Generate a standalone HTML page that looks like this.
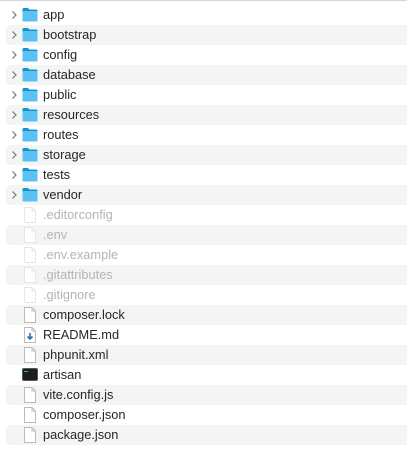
<!DOCTYPE html><html><head><style>
body{margin:0;width:407px;height:452px;background:#fff;font-family:"Liberation Sans",sans-serif;font-size:12.8px;color:#262626;position:relative;overflow:hidden}
.top{position:absolute;left:0;top:0;width:407px;height:1px;background:#d6d6d6}
.r{position:absolute;left:6px;width:401px;height:20px;border-radius:5px 0 0 5px}
.r.s{background:#f3f4f4}
.t{position:absolute;left:37px;top:3px;line-height:14px;white-space:nowrap}
.g .t{color:#b4b4b4}
.ch{position:absolute;left:5px;top:5px}
.ic{position:absolute;left:16px;top:2px}
</style></head><body><div class="top"></div>
<script>
const F='<svg class="ch" width="7" height="10" viewBox="0 0 7 10"><path d="M1.5 1.5L5 5L1.5 8.5" fill="none" stroke="#777" stroke-width="1.2"/></svg><svg class="ic" width="16" height="15" viewBox="0 0 16 15"><path d="M0.5 2.5Q0.5 1 2 1H6L7.5 2.5H14Q15.5 2.5 15.5 4V13Q15.5 14.5 14 14.5H2Q0.5 14.5 0.5 13Z" fill="#1a90d0"/><rect x="0.5" y="4" width="15" height="10.5" rx="1" fill="#5bc0f2"/></svg>';
const D=(c)=>`<svg class="ic" width="14" height="16" viewBox="0 0 14 16" style="left:17px"><path d="M1.5 0.5H9L12.5 4V15.5H1.5Z" fill="#fff" stroke="${c}" stroke-width="1"/><path d="M9 0.5V4H12.5" fill="none" stroke="${c}"/></svg>`;
const items=[["app",F],["bootstrap",F],["config",F],["database",F],["public",F],["resources",F],["routes",F],["storage",F],["tests",F],["vendor",F],
[".editorconfig",D("#e6e6e6"),1],[".env",D("#e6e6e6"),1],[".env.example",D("#e6e6e6"),1],[".gitattributes",D("#e6e6e6"),1],[".gitignore",D("#e6e6e6"),1],
["composer.lock",D("#bbb")],["README.md",D("#bbb")+'<svg class="ic" width="14" height="16" style="left:17px"><path d="M7 6V12M4.5 9.5L7 12L9.5 9.5" stroke="#2a6fb0" stroke-width="1.6" fill="none"/></svg>'],["phpunit.xml",D("#bbb")],
["artisan",'<svg class="ic" width="16" height="14" style="top:3px"><rect x="0.5" y="0.5" width="15" height="12" rx="1.5" fill="#1e1e1e" stroke="#555"/><rect x="2" y="3" width="4" height="1" fill="#3c3"/></svg>'],
["vite.config.js",D("#bbb")],["composer.json",D("#bbb")],["package.json",D("#bbb")]];
items.forEach((it,i)=>{document.write(`<div class="r${i%2?' s':''}${it[2]?' g':''}" style="top:${5+20*i}px">${it[1]}<div class="t">${it[0]}</div></div>`)});
</script></body></html>
